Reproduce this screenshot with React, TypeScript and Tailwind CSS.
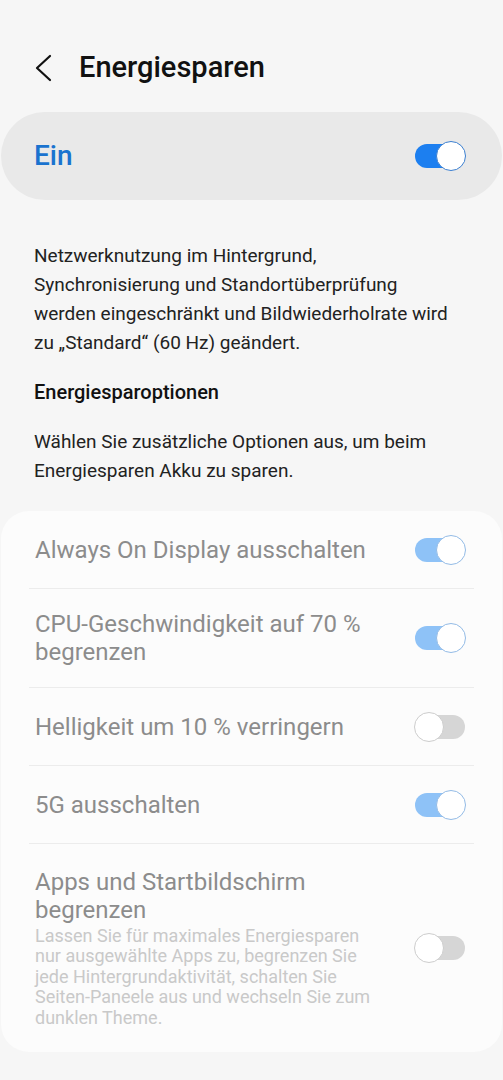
import React from "react";

function Toggle({ on, variant }: { on: boolean; variant: "main" | "light" }) {
  if (on) {
    const track = variant === "main" ? "bg-[#1c7ff0]" : "bg-[#8ec2f7]";
    const border = variant === "main" ? "border-[#3b7fd0]" : "border-[#93bbe6]";
    return (
      <div className="relative w-[52px] h-[30px] flex items-center">
        <div className={`absolute left-[1px] right-[4px] h-[24px] rounded-full ${track}`} />
        <div className={`absolute right-0 w-[30px] h-[30px] rounded-full bg-white border-[1.5px] ${border}`} />
      </div>
    );
  }
  return (
    <div className="relative w-[52px] h-[30px] flex items-center">
      <div className="absolute left-[4px] right-[1px] h-[24px] rounded-full bg-[#d6d6d6]" />
      <div className="absolute left-0 w-[30px] h-[30px] rounded-full bg-white border-[1.5px] border-[#cdcdcd]" />
    </div>
  );
}

function Row({
  title,
  sub,
  on,
  h,
  divider = true,
}: {
  title: React.ReactNode;
  sub?: React.ReactNode;
  on: boolean;
  h: string;
  divider?: boolean;
}) {
  return (
    <div className="px-[28px]">
      <div className={`flex items-center justify-between ${h} ${divider ? "border-b border-[#ececec]" : ""}`}>
        <div className="pl-[6px] flex-1 whitespace-nowrap">
          <div className="text-[24px] leading-[28px] text-[#8c8c8c]">{title}</div>
          {sub && (
            <div className="text-[18px] leading-[20.5px] text-[#c9c9c9] mt-[2px]">{sub}</div>
          )}
        </div>
        <div className="mr-[8px]">
          <Toggle on={on} variant="light" />
        </div>
      </div>
    </div>
  );
}

export default function App() {
  return (
    <div
      className="w-[503px] h-[1080px] bg-[#f6f6f6] overflow-hidden"
      style={{ fontFamily: "Roboto, 'Noto Sans', sans-serif" }}
    >
      <div className="h-[112px] flex items-center pt-[24px]">
        <div className="w-[79px] flex justify-start pl-[35px]">
          <svg width="18" height="28" viewBox="0 0 18 28" fill="none">
            <path d="M15 2 L2 14 L15 26" stroke="#111" strokeWidth="2.2" strokeLinecap="round" strokeLinejoin="round" />
          </svg>
        </div>
        <div className="text-[29px] font-medium text-[#111]">Energiesparen</div>
      </div>

      <div className="h-[88px] mx-[1px] rounded-full bg-[#e9e9e9] flex items-center justify-between pl-[33px] pr-[36px]">
        <div className="text-[28px] font-medium text-[#1a73cf]">Ein</div>
        <Toggle on={true} variant="main" />
      </div>

      <div className="px-[34px] pt-[41px] text-[19px] leading-[29px] text-[#222] whitespace-nowrap">
        <p>
          Netzwerknutzung im Hintergrund,
          <br />
          Synchronisierung und Standortüberprüfung
          <br />
          werden eingeschränkt und Bildwiederholrate wird
          <br />
          zu „Standard“ (60 Hz) geändert.
        </p>
        <p className="mt-[21px] text-[20px] font-medium text-[#111]">Energiesparoptionen</p>
        <p className="mt-[20px]">
          Wählen Sie zusätzliche Optionen aus, um beim
          <br />
          Energiesparen Akku zu sparen.
        </p>
      </div>

      <div className="mt-[26px] mx-[1px] rounded-[28px] bg-[#fcfcfc]">
        <Row title="Always On Display ausschalten" on={true} h="h-[78px]" />
        <Row
          title={
            <>
              CPU-Geschwindigkeit auf 70 %
              <br />
              begrenzen
            </>
          }
          on={true}
          h="h-[99px]"
        />
        <Row title="Helligkeit um 10 % verringern" on={false} h="h-[78px]" />
        <Row title="5G ausschalten" on={true} h="h-[78px]" />
        <Row
          title={
            <>
              Apps und Startbildschirm
              <br />
              begrenzen
            </>
          }
          sub={
            <>
              Lassen Sie für maximales Energiesparen
              <br />
              nur ausgewählte Apps zu, begrenzen Sie
              <br />
              jede Hintergrundaktivität, schalten Sie
              <br />
              Seiten-Paneele aus und wechseln Sie zum
              <br />
              dunklen Theme.
            </>
          }
          on={false}
          h="h-[208px]"
          divider={false}
        />
      </div>
    </div>
  );
}
